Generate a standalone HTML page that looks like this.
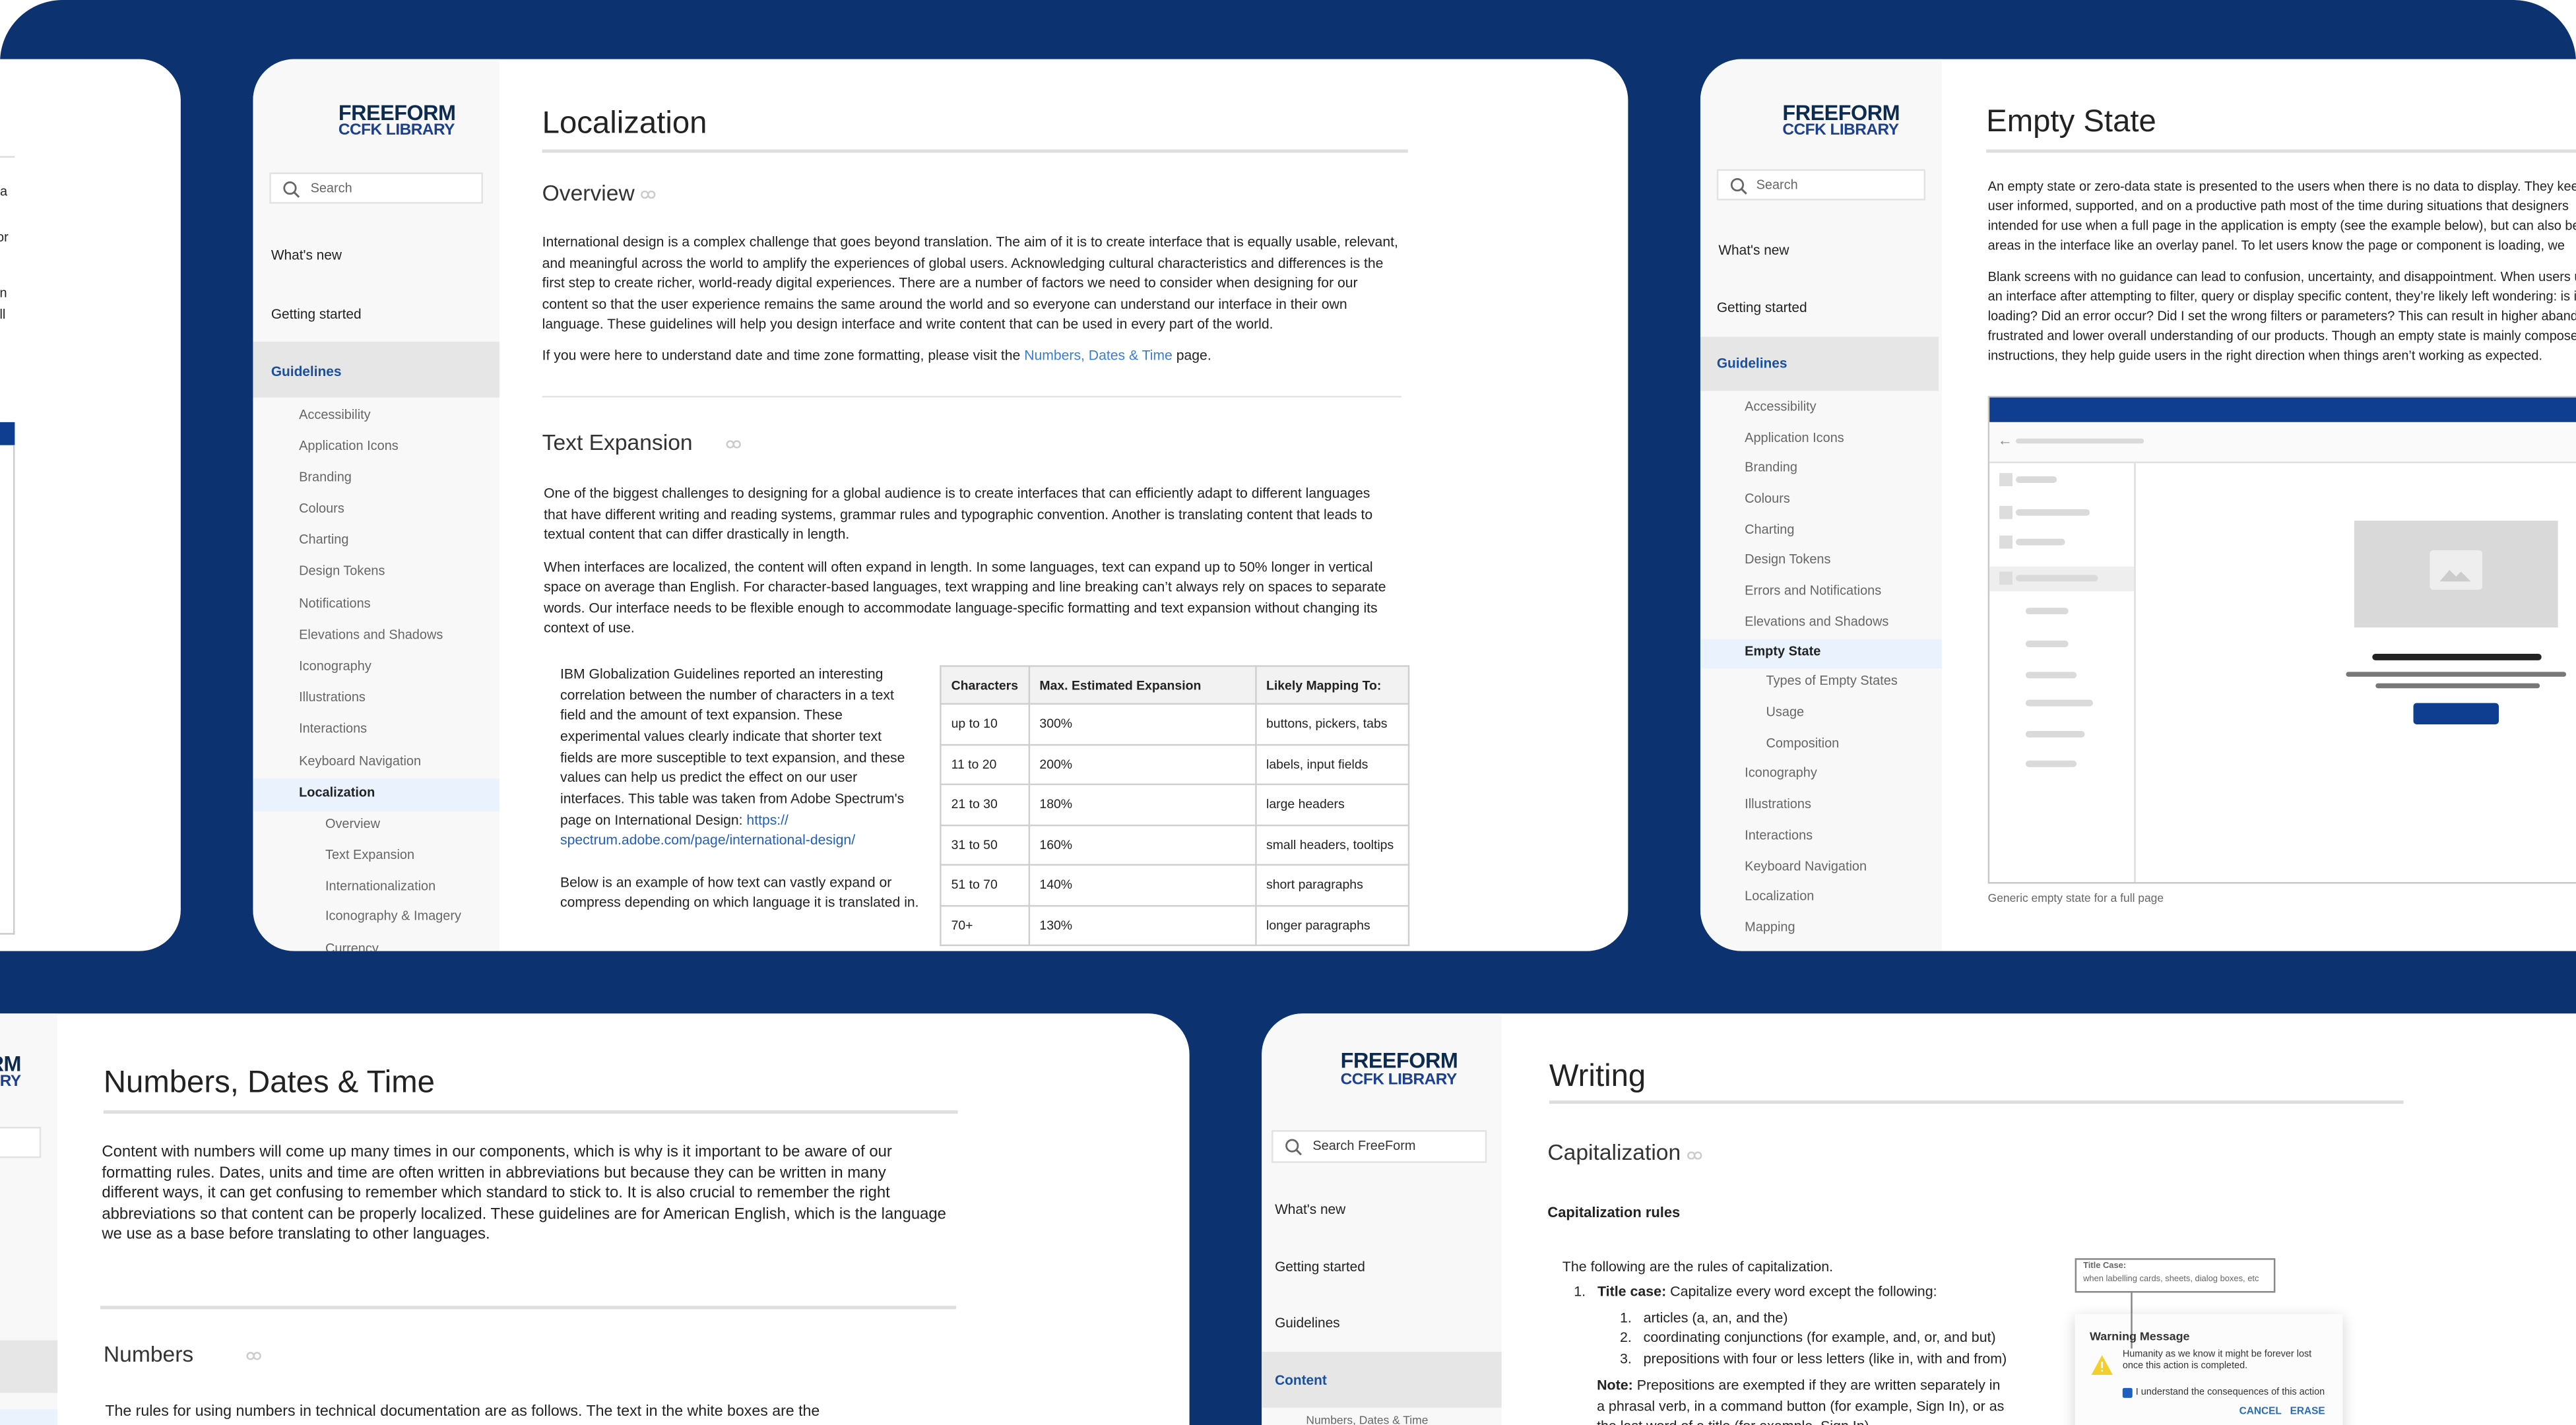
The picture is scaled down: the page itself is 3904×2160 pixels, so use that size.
<!DOCTYPE html>
<html><head><meta charset="utf-8">
<style>
*{margin:0;padding:0;box-sizing:border-box}
html,body{width:3904px;height:2160px;overflow:hidden;background:#fff}
#s{position:absolute;left:0;top:0;width:1568px;height:867.5px;overflow:hidden;transform:scale(2.4898);transform-origin:0 0;font-family:"Liberation Sans",sans-serif;color:#222}
.bg{position:absolute;left:0;top:0;width:1568px;height:868px;background:#0c3270;border-radius:38px 38px 0 0}
.p{position:absolute;background:#fff;overflow:hidden}
.sb{position:absolute;background:#f8f8f8;top:0;bottom:0}
.t{position:absolute;white-space:nowrap;line-height:12px}
.lg1{position:absolute;font-weight:bold;color:#0d2a4f;font-size:13px;line-height:12px;letter-spacing:-.2px}
.lg2{position:absolute;font-weight:bold;color:#1b3f91;font-size:9.8px;line-height:10px;letter-spacing:-.2px}
.srch{position:absolute;background:#fff;border:1px solid #e2e2e2;font-size:8px;color:#666;line-height:18px}
.srch svg{position:absolute;left:7px;top:4px}
.nav{font-size:8.4px;color:#222}
.sub{font-size:8px;color:#666}
.band{position:absolute;background:#e6e6e6}
.hl{position:absolute;background:#eaf3fd}
.h1{font-size:19px;color:#222;line-height:24px}
.h2{font-size:13.5px;color:#333;line-height:18px;font-weight:300}
.rule{position:absolute;height:2px;background:#dedede}
.rule1{position:absolute;height:1px;background:#e3e3e3}
.bd{font-size:8.5px;color:#222;line-height:12.6px}
.a{color:#3a7bd5}
table{position:absolute;border-collapse:collapse;font-size:7.8px}
td,th{border:1px solid #cfcfcf;padding:0 6px;height:24.5px;text-align:left;font-weight:normal;color:#222}
th{background:#f2f2f2;font-weight:bold;height:23px}
.gb{position:absolute;background:#dadada;border-radius:3px;height:4px}
.lk{position:absolute}
</style></head><body>
<div id="s">
<div class="bg"></div>

<!-- Panel 1 partial -->
<div class="p" style="left:-40px;top:36px;width:150px;height:543px;border-radius:0 25px 25px 0">
  <div class="t" style="left:40px;top:75px;font-size:8px">a</div>
  <div class="t" style="left:38px;top:103px;font-size:8px">or</div>
  <div class="t" style="left:38px;top:137px;font-size:8px">in</div>
  <div class="t" style="left:38px;top:150px;font-size:8px">ill</div>
  <div style="position:absolute;left:40px;top:59px;width:9px;height:1px;background:#ddd"></div>
  <div style="position:absolute;left:40px;top:221px;width:9px;height:14px;background:#0f3d8f"></div>
  <div style="position:absolute;left:40px;top:235px;width:9px;height:298px;border-right:1px solid #ccc;border-bottom:1px solid #ccc"></div>
</div>

<!-- Panel 2 Localization -->
<div class="p" style="left:154px;top:36px;width:837px;height:543px;border-radius:25px">
  <div class="sb" style="left:0;width:150px"></div>
  <div class="lg1" style="left:52px;top:27px">FREEFORM</div>
  <div class="lg2" style="left:52px;top:39px">CCFK LIBRARY</div>
  <div class="srch" style="left:10px;top:69px;width:130px;height:19px;padding-left:24px">Search<svg width="11" height="11" viewBox="0 0 11 11"><circle cx="4.5" cy="4.5" r="3.5" fill="none" stroke="#666" stroke-width="1.1"/><path d="M7 7l3 3" stroke="#666" stroke-width="1.2"/></svg></div>
  <div class="t nav" style="left:11px;top:113px">What's new</div>
  <div class="t nav" style="left:11px;top:149px">Getting started</div>
  <div class="band" style="left:0;top:172px;width:150px;height:34px"></div>
  <div class="t nav" style="left:11px;top:184px;color:#1b4f9c;font-weight:bold">Guidelines</div>
  <div class="t sub" style="left:28px;top:211px">Accessibility</div>
  <div class="t sub" style="left:28px;top:230px">Application Icons</div>
  <div class="t sub" style="left:28px;top:249px">Branding</div>
  <div class="t sub" style="left:28px;top:268px">Colours</div>
  <div class="t sub" style="left:28px;top:287px">Charting</div>
  <div class="t sub" style="left:28px;top:306px">Design Tokens</div>
  <div class="t sub" style="left:28px;top:326px">Notifications</div>
  <div class="t sub" style="left:28px;top:345px">Elevations and Shadows</div>
  <div class="t sub" style="left:28px;top:364px">Iconography</div>
  <div class="t sub" style="left:28px;top:383px">Illustrations</div>
  <div class="t sub" style="left:28px;top:402px">Interactions</div>
  <div class="t sub" style="left:28px;top:422px">Keyboard Navigation</div>
  <div class="hl" style="left:0;top:438px;width:150px;height:20px"></div>
  <div class="t sub" style="left:28px;top:441px;color:#222;font-weight:bold">Localization</div>
  <div class="t sub" style="left:44px;top:460px">Overview</div>
  <div class="t sub" style="left:44px;top:479px">Text Expansion</div>
  <div class="t sub" style="left:44px;top:498px">Internationalization</div>
  <div class="t sub" style="left:44px;top:516px">Iconography &amp; Imagery</div>
  <div class="t sub" style="left:44px;top:536px">Currency</div>

  <div class="t h1" style="left:176px;top:28px">Localization</div>
  <div class="rule" style="left:176px;top:55px;width:527px"></div>
  <div class="t h2" style="left:176px;top:73px">Overview</div>
  <svg class="lk" style="left:236px;top:80px" width="9" height="5" viewBox="0 0 9 5"><rect x=".5" y=".5" width="4" height="4" rx="2" fill="none" stroke="#ccc"/><rect x="4.5" y=".5" width="4" height="4" rx="2" fill="none" stroke="#ccc"/></svg>
  <div class="t bd" style="left:176px;top:105px">International design is a complex challenge that goes beyond translation. The aim of it is to create interface that is equally usable, relevant,</div>
  <div class="t bd" style="left:176px;top:118px">and meaningful across the world to amplify the experiences of global users. Acknowledging cultural characteristics and differences is the</div>
  <div class="t bd" style="left:176px;top:130px">first step to create richer, world-ready digital experiences. There are a number of factors we need to consider when designing for our</div>
  <div class="t bd" style="left:176px;top:143px">content so that the user experience remains the same around the world and so everyone can understand our interface in their own</div>
  <div class="t bd" style="left:176px;top:155px">language. These guidelines will help you design interface and write content that can be used in every part of the world.</div>
  <div class="t bd" style="left:176px;top:174px">If you were here to understand date and time zone formatting, please visit the <span class="a">Numbers, Dates &amp; Time</span> page.</div>
  <div class="rule1" style="left:176px;top:205px;width:523px"></div>
  <div class="t h2" style="left:176px;top:225px">Text Expansion</div>
  <svg class="lk" style="left:288px;top:232px" width="9" height="5" viewBox="0 0 9 5"><rect x=".5" y=".5" width="4" height="4" rx="2" fill="none" stroke="#ccc"/><rect x="4.5" y=".5" width="4" height="4" rx="2" fill="none" stroke="#ccc"/></svg>
  <div class="t bd" style="left:177px;top:258px">One of the biggest challenges to designing for a global audience is to create interfaces that can efficiently adapt to different languages</div>
  <div class="t bd" style="left:177px;top:271px">that have different writing and reading systems, grammar rules and typographic convention. Another is translating content that leads to</div>
  <div class="t bd" style="left:177px;top:283px">textual content that can differ drastically in length.</div>
  <div class="t bd" style="left:177px;top:303px">When interfaces are localized, the content will often expand in length. In some languages, text can expand up to 50% longer in vertical</div>
  <div class="t bd" style="left:177px;top:315px">space on average than English. For character-based languages, text wrapping and line breaking can’t always rely on spaces to separate</div>
  <div class="t bd" style="left:177px;top:328px">words. Our interface needs to be flexible enough to accommodate language-specific formatting and text expansion without changing its</div>
  <div class="t bd" style="left:177px;top:340px">context of use.</div>
  <div class="t bd" style="left:187px;top:368px">IBM Globalization Guidelines reported an interesting</div>
  <div class="t bd" style="left:187px;top:381px">correlation between the number of characters in a text</div>
  <div class="t bd" style="left:187px;top:393px">field and the amount of text expansion. These</div>
  <div class="t bd" style="left:187px;top:406px">experimental values clearly indicate that shorter text</div>
  <div class="t bd" style="left:187px;top:419px">fields are more susceptible to text expansion, and these</div>
  <div class="t bd" style="left:187px;top:431px">values can help us predict the effect on our user</div>
  <div class="t bd" style="left:187px;top:444px">interfaces. This table was taken from Adobe Spectrum's</div>
  <div class="t bd" style="left:187px;top:457px">page on International Design: <span style="color:#1f5fbf">https://</span></div>
  <div class="t bd" style="left:187px;top:469px;color:#1f5fbf">spectrum.adobe.com/page/international-design/</div>
  <div class="t bd" style="left:187px;top:495px">Below is an example of how text can vastly expand or</div>
  <div class="t bd" style="left:187px;top:507px">compress depending on which language it is translated in.</div>
  <table style="left:418px;top:369px;width:286px">
    <tr><th style="width:45px">Characters</th><th style="width:138px">Max. Estimated Expansion</th><th>Likely Mapping To:</th></tr>
    <tr><td>up to 10</td><td>300%</td><td>buttons, pickers, tabs</td></tr>
    <tr><td>11 to 20</td><td>200%</td><td>labels, input fields</td></tr>
    <tr><td>21 to 30</td><td>180%</td><td>large headers</td></tr>
    <tr><td>31 to 50</td><td>160%</td><td>small headers, tooltips</td></tr>
    <tr><td>51 to 70</td><td>140%</td><td>short paragraphs</td></tr>
    <tr><td>70+</td><td>130%</td><td>longer paragraphs</td></tr>
  </table>
</div>

<!-- Panel 3 Empty State -->
<div class="p" style="left:1035px;top:36px;width:560px;height:543px;border-radius:25px 0 0 25px">
  <div class="sb" style="left:0;width:147px"></div>
  <div class="lg1" style="left:50px;top:27px">FREEFORM</div>
  <div class="lg2" style="left:50px;top:39px">CCFK LIBRARY</div>
  <div class="srch" style="left:10px;top:67px;width:127px;height:19px;padding-left:23px">Search<svg width="11" height="11" viewBox="0 0 11 11"><circle cx="4.5" cy="4.5" r="3.5" fill="none" stroke="#666" stroke-width="1.1"/><path d="M7 7l3 3" stroke="#666" stroke-width="1.2"/></svg></div>
  <div class="t nav" style="left:11px;top:110px">What's new</div>
  <div class="t nav" style="left:10px;top:145px">Getting started</div>
  <div class="band" style="left:0;top:169px;width:145px;height:33px"></div>
  <div class="t nav" style="left:10px;top:179px;color:#1b4f9c;font-weight:bold">Guidelines</div>
  <div class="t sub" style="left:27px;top:206px">Accessibility</div>
  <div class="t sub" style="left:27px;top:225px">Application Icons</div>
  <div class="t sub" style="left:27px;top:243px">Branding</div>
  <div class="t sub" style="left:27px;top:262px">Colours</div>
  <div class="t sub" style="left:27px;top:281px">Charting</div>
  <div class="t sub" style="left:27px;top:299px">Design Tokens</div>
  <div class="t sub" style="left:27px;top:318px">Errors and Notifications</div>
  <div class="t sub" style="left:27px;top:337px">Elevations and Shadows</div>
  <div class="hl" style="left:0;top:353px;width:147px;height:18px"></div>
  <div class="t sub" style="left:27px;top:355px;color:#222;font-weight:bold">Empty State</div>
  <div class="t sub" style="left:40px;top:373px">Types of Empty States</div>
  <div class="t sub" style="left:40px;top:392px">Usage</div>
  <div class="t sub" style="left:40px;top:411px">Composition</div>
  <div class="t sub" style="left:27px;top:429px">Iconography</div>
  <div class="t sub" style="left:27px;top:448px">Illustrations</div>
  <div class="t sub" style="left:27px;top:467px">Interactions</div>
  <div class="t sub" style="left:27px;top:486px">Keyboard Navigation</div>
  <div class="t sub" style="left:27px;top:504px">Localization</div>
  <div class="t sub" style="left:27px;top:523px">Mapping</div>

  <div class="t h1" style="left:174px;top:27px">Empty State</div>
  <div class="rule" style="left:174px;top:55px;width:400px"></div>
  <div class="t bd" style="left:175px;top:72px;font-size:8px">An empty state or zero-data state is presented to the users when there is no data to display. They keep the</div>
  <div class="t bd" style="left:175px;top:84px;font-size:8px">user informed, supported, and on a productive path most of the time during situations that designers</div>
  <div class="t bd" style="left:175px;top:96px;font-size:8px">intended for use when a full page in the application is empty (see the example below), but can also be</div>
  <div class="t bd" style="left:175px;top:108px;font-size:8px">areas in the interface like an overlay panel. To let users know the page or component is loading, we</div>
  <div class="t bd" style="left:175px;top:127px;font-size:8px">Blank screens with no guidance can lead to confusion, uncertainty, and disappointment. When users use</div>
  <div class="t bd" style="left:175px;top:139px;font-size:8px">an interface after attempting to filter, query or display specific content, they’re likely left wondering: is it</div>
  <div class="t bd" style="left:175px;top:151px;font-size:8px">loading? Did an error occur? Did I set the wrong filters or parameters? This can result in higher abandon</div>
  <div class="t bd" style="left:175px;top:163px;font-size:8px">frustrated and lower overall understanding of our products. Though an empty state is mainly composed</div>
  <div class="t bd" style="left:175px;top:175px;font-size:8px">instructions, they help guide users in the right direction when things aren’t working as expected.</div>
  <div style="position:absolute;left:175px;top:205px;width:400px;height:297px;border:1px solid #c8c8c8;background:#fff">
    <div style="position:absolute;left:0;top:0;right:0;height:15px;background:#0f3d8f"></div>
    <div style="position:absolute;left:0;top:15px;right:0;height:25px;background:#fafafa;border-bottom:1px solid #e0e0e0"></div>
    <div class="t" style="left:5px;top:20px;font-size:9px;color:#888">&#8592;</div>
    <div class="gb" style="left:16px;top:25px;width:78px;height:3px"></div>
    <div style="position:absolute;left:0;top:40px;width:89px;bottom:0;border-right:1px solid #ddd"></div>
    <div style="position:absolute;left:0;top:103px;width:88px;height:15px;background:#eee"></div>
    <div style="position:absolute;left:6px;top:46px;width:8px;height:8px;background:#ddd"></div><div class="gb" style="left:16px;top:48px;width:25px"></div>
    <div style="position:absolute;left:6px;top:66px;width:8px;height:8px;background:#ddd"></div><div class="gb" style="left:16px;top:68px;width:45px"></div>
    <div style="position:absolute;left:6px;top:84px;width:8px;height:8px;background:#ddd"></div><div class="gb" style="left:16px;top:86px;width:30px"></div>
    <div style="position:absolute;left:6px;top:106px;width:8px;height:8px;background:#ddd"></div><div class="gb" style="left:16px;top:108px;width:50px"></div>
    <div class="gb" style="left:22px;top:128px;width:26px"></div>
    <div class="gb" style="left:22px;top:148px;width:26px"></div>
    <div class="gb" style="left:22px;top:167px;width:31px"></div>
    <div class="gb" style="left:22px;top:184px;width:41px"></div>
    <div class="gb" style="left:22px;top:203px;width:36px"></div>
    <div class="gb" style="left:22px;top:221px;width:31px"></div>
    <div style="position:absolute;left:222px;top:75px;width:124px;height:65px;background:#d9d9d9">
      <div style="position:absolute;left:46px;top:18px;width:32px;height:24px;background:#eee;border-radius:2px"></div>
      <svg style="position:absolute;left:52px;top:26px" width="20" height="12" viewBox="0 0 20 12"><path d="M0 11L6 4l4 4 3-3 6 6z" fill="#ccc"/></svg>
    </div>
    <div style="position:absolute;left:233px;top:156px;width:103px;height:4px;background:#222;border-radius:2px"></div>
    <div style="position:absolute;left:217px;top:167px;width:134px;height:3px;background:#777;border-radius:2px"></div>
    <div style="position:absolute;left:235px;top:174px;width:100px;height:3px;background:#777;border-radius:2px"></div>
    <div style="position:absolute;left:258px;top:186px;width:52px;height:13px;background:#0f3d8f;border-radius:2px"></div>
  </div>
  <div class="t" style="left:175px;top:506px;font-size:7px;color:#666">Generic empty state for a full page</div>
</div>

<!-- Panel 4 Numbers -->
<div class="p" style="left:-40px;top:617px;width:764px;height:251px;border-radius:0 25px 0 0">
  <div class="sb" style="left:0;width:75px"></div>
  <div class="lg1" style="left:33px;top:25px">RM</div>
  <div class="lg2" style="left:33px;top:37px">ARY</div>
  <div class="srch" style="left:10px;top:69px;width:55px;height:19px"></div>
  <div class="band" style="left:0;top:199px;width:75px;height:32px"></div>
  <div class="hl" style="left:0;top:241px;width:75px;height:20px"></div>
  <div class="t h1" style="left:103px;top:31px">Numbers, Dates &amp; Time</div>
  <div class="rule" style="left:103px;top:59px;width:520px"></div>
  <div class="t bd" style="left:102px;top:79px;font-size:9.6px">Content with numbers will come up many times in our components, which is why is it important to be aware of our</div>
  <div class="t bd" style="left:102px;top:92px;font-size:9.6px">formatting rules. Dates, units and time are often written in abbreviations but because they can be written in many</div>
  <div class="t bd" style="left:102px;top:104px;font-size:9.6px">different ways, it can get confusing to remember which standard to stick to. It is also crucial to remember the right</div>
  <div class="t bd" style="left:102px;top:117px;font-size:9.6px">abbreviations so that content can be properly localized. These guidelines are for American English, which is the language</div>
  <div class="t bd" style="left:102px;top:129px;font-size:9.6px">we use as a base before translating to other languages.</div>
  <div class="rule" style="left:101px;top:178px;width:521px"></div>
  <div class="t h2" style="left:103px;top:199px">Numbers</div>
  <svg class="lk" style="left:190px;top:206px" width="9" height="5" viewBox="0 0 9 5"><rect x=".5" y=".5" width="4" height="4" rx="2" fill="none" stroke="#ccc"/><rect x="4.5" y=".5" width="4" height="4" rx="2" fill="none" stroke="#ccc"/></svg>
  <div class="t bd" style="left:104px;top:236px;font-size:9.3px">The rules for using numbers in technical documentation are as follows. The text in the white boxes are the</div>
</div>

<!-- Panel 5 Writing -->
<div class="p" style="left:768px;top:617px;width:830px;height:251px;border-radius:25px 0 0 0">
  <div class="sb" style="left:0;width:146px"></div>
  <div class="lg1" style="left:48px;top:23px">FREEFORM</div>
  <div class="lg2" style="left:48px;top:36px">CCFK LIBRARY</div>
  <div class="srch" style="left:6px;top:71px;width:131px;height:20px;padding-left:24px;color:#333">Search FreeForm<svg width="11" height="11" viewBox="0 0 11 11"><circle cx="4.5" cy="4.5" r="3.5" fill="none" stroke="#666" stroke-width="1.1"/><path d="M7 7l3 3" stroke="#666" stroke-width="1.2"/></svg></div>
  <div class="t nav" style="left:8px;top:113px">What's new</div>
  <div class="t nav" style="left:8px;top:148px">Getting started</div>
  <div class="t nav" style="left:8px;top:182px">Guidelines</div>
  <div class="band" style="left:0;top:206px;width:146px;height:34px"></div>
  <div class="t nav" style="left:8px;top:217px;color:#1b4f9c;font-weight:bold">Content</div>
  <div class="t sub" style="left:27px;top:243px;font-size:7px">Numbers, Dates &amp; Time</div>

  <div class="t h1" style="left:175px;top:27px">Writing</div>
  <div class="rule" style="left:175px;top:53px;width:520px"></div>
  <div class="t h2" style="left:174px;top:76px">Capitalization</div>
  <svg class="lk" style="left:259px;top:84px" width="9" height="5" viewBox="0 0 9 5"><rect x=".5" y=".5" width="4" height="4" rx="2" fill="none" stroke="#ccc"/><rect x="4.5" y=".5" width="4" height="4" rx="2" fill="none" stroke="#ccc"/></svg>
  <div class="t" style="left:174px;top:115px;font-size:8.8px;font-weight:bold">Capitalization rules</div>
  <div class="t bd" style="left:183px;top:148px;font-size:8.6px">The following are the rules of capitalization.</div>
  <div class="t bd" style="left:190px;top:163px;font-size:8.6px">1.&nbsp;&nbsp; <b>Title case:</b> Capitalize every word except the following:</div>
  <div class="t bd" style="left:218px;top:179px;font-size:8.6px">1.&nbsp;&nbsp; articles (a, an, and the)</div>
  <div class="t bd" style="left:218px;top:191px;font-size:8.6px">2.&nbsp;&nbsp; coordinating conjunctions (for example, and, or, and but)</div>
  <div class="t bd" style="left:218px;top:204px;font-size:8.6px">3.&nbsp;&nbsp; prepositions with four or less letters (like in, with and from)</div>
  <div class="t bd" style="left:204px;top:220px;font-size:8.6px"><b>Note:</b> Prepositions are exempted if they are written separately in</div>
  <div class="t bd" style="left:204px;top:233px;font-size:8.6px">a phrasal verb, in a command button (for example, Sign In), or as</div>
  <div class="t bd" style="left:204px;top:245px;font-size:8.6px">the last word of a title (for example, Sign In).</div>
  <div style="position:absolute;left:495px;top:149px;width:122px;height:21px;border:1px solid #888;background:#fff">
    <div class="t" style="left:4px;top:1px;font-size:5.2px;line-height:7px;color:#666;font-weight:bold">Title Case:</div>
    <div class="t" style="left:4px;top:9px;font-size:5.2px;line-height:7px;color:#666">when labelling cards, sheets, dialog boxes, etc</div>
  </div>
  <div style="position:absolute;left:529px;top:170px;width:1px;height:34px;background:#888"></div>
  <div style="position:absolute;left:495px;top:183px;width:163px;height:90px;background:#fcfcfc;box-shadow:0 2px 8px rgba(0,0,0,.18)">
    <div style="position:absolute;left:34px;top:0;width:1px;height:21px;background:#888"></div>
    <div class="t" style="left:9px;top:8px;font-size:7.2px;font-weight:bold;color:#333">Warning Message</div>
    <svg style="position:absolute;left:10px;top:25px" width="13" height="12" viewBox="0 0 13 12"><path d="M6.5 0L13 12H0z" fill="#f3cf2d"/><rect x="6" y="4" width="1" height="4" fill="#fff"/><rect x="6" y="9" width="1" height="1" fill="#fff"/></svg>
    <div class="t" style="left:29px;top:22px;font-size:5.8px;line-height:7px;color:#333">Humanity as we know it might be forever lost</div>
    <div class="t" style="left:29px;top:29px;font-size:5.8px;line-height:7px;color:#333">once this action is completed.</div>
    <div style="position:absolute;left:29px;top:45px;width:6px;height:6px;background:#1f5fbf;border-radius:1px"></div>
    <div class="t" style="left:37px;top:44px;font-size:5.8px;line-height:8px;color:#333">I understand the consequences of this action</div>
    <div class="t" style="left:100px;top:56px;font-size:6.2px;line-height:8px;color:#2a6db5;font-weight:bold">CANCEL&nbsp;&nbsp;&nbsp;ERASE</div>
  </div>
</div>
</div>
</body></html>
